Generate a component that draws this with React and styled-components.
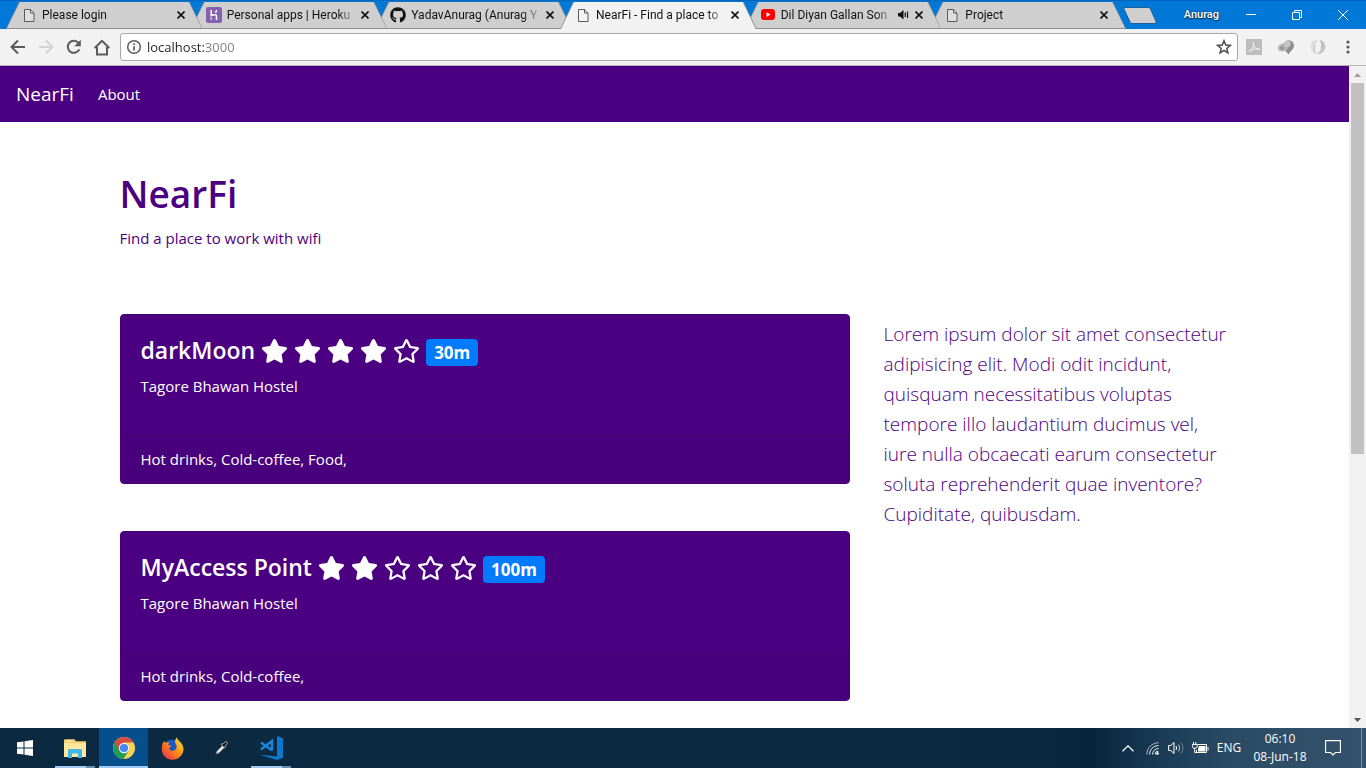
import React from 'react';
import styled, { createGlobalStyle, css } from 'styled-components';
import { FaStar, FaRegStar, FaGithub } from 'react-icons/fa';

const indigo = '#4b0082';

const GlobalStyle = createGlobalStyle`
  *, *::before, *::after { box-sizing: border-box; }
  body {
    margin: 0;
    background: #fff;
    font-family: "Open Sans", "Noto Sans", sans-serif;
    font-size: 15px;
    line-height: 24px;
  }
  button { border: 0; padding: 0; background: none; font: inherit; color: inherit; }
  svg { display: block; flex: none; }
  h1, h2, p, ul { margin: 0; padding: 0; }
  ul { list-style: none; }
`;

const Screen = styled.div`
  display: flex;
  flex-direction: column;
  height: 100vh;
  overflow: hidden;
`;

/* ---- browser window ---- */

const TitleBar = styled.header`
  display: flex;
  align-items: stretch;
  height: 29px;
  padding-left: 6px;
  background: #0078d7;
  border-top: 1px solid #0067bd;
`;

const TabList = styled.ul`
  display: flex;
  flex: 0 1 1108px;
  min-width: 0;
`;

const TabItem = styled.li`
  position: relative;
  display: flex;
  align-items: center;
  flex: 1 1 0;
  min-width: 0;
  margin-right: -12px;
  padding: 0 14px 0 15px;
  z-index: ${(p) => p.$z};
  font-family: Roboto, "Open Sans", sans-serif;
  font-size: 12px;
  line-height: 16px;
  color: #111;

  &::before, &::after {
    content: "";
    position: absolute;
    inset: 0;
    z-index: -1;
    clip-path: polygon(0 100%, 13px 1px, calc(100% - 13px) 1px, 100% 100%);
  }
  &::before { background: #8f8f8f; }
  &::after {
    background: ${(p) => (p.$active ? '#f2f2f2' : '#cfcfcf')};
    clip-path: polygon(
      1px 100%, 14px 1px, calc(100% - 14px) 1px, calc(100% - 1px) 100%);
    ${(p) => !p.$active && css`bottom: 1px;`}
  }
`;

const TabIcon = styled.span`
  display: flex;
  justify-content: center;
  flex: none;
  width: 16px;
  margin-right: 5px;
`;

const TabTitle = styled.span`
  flex: 1;
  min-width: 0;
  overflow: hidden;
  white-space: nowrap;
  mask-image: linear-gradient(to right, #000 calc(100% - 20px), transparent);
`;

const TabButton = styled.button`
  display: grid;
  place-items: center;
  width: 16px;
  height: 16px;
  flex: none;
`;

const NewTab = styled.button`
  align-self: center;
  width: 34px;
  height: 17px;
  margin: 0 0 0 9px;
  flex: none;
`;

const WindowControls = styled.div`
  display: flex;
  align-items: center;
  margin-left: auto;
  color: #fff;
  font-size: 11px;
`;

const Profile = styled.button`
  margin-right: 9px;
  font-family: Roboto, "Open Sans", sans-serif;
  font-weight: 500;
  text-shadow: 0 1px 1px #002a4d, 0 0 2px #002a4d;
`;

const WindowButton = styled.button`
  display: grid;
  place-items: center;
  width: 46px;
  height: 28px;
`;

const Toolbar = styled.div`
  display: flex;
  align-items: center;
  height: 37px;
  padding-left: 6px;
  background: #f2f2f2;
  border-bottom: 1px solid #b4b4b4;
`;

const ToolButton = styled.button`
  display: grid;
  place-items: center;
  width: ${(p) => p.$width}px;
  height: 28px;
  flex: none;
`;

const AddressBar = styled.form`
  display: flex;
  align-items: center;
  flex: 1;
  min-width: 0;
  height: 28px;
  margin: 0 4px 0 2px;
  padding: 0 5px;
  background: #fff;
  border: 1px solid #a9a9a9;
  border-radius: 3px;
`;

const AddressInput = styled.input`
  flex: 1;
  min-width: 0;
  margin-left: 5px;
  padding: 0;
  border: 0;
  outline: 0;
  font: inherit;
  font-size: 13px;
  line-height: 20px;
  color: transparent;
  background: linear-gradient(to right, #222 57px, #808080 57px);
  background-clip: text;
  -webkit-background-clip: text;
`;

const Viewport = styled.div`
  display: flex;
  flex: 1;
  min-height: 0;
`;

const Page = styled.div`
  flex: 1;
  min-width: 0;
  overflow: hidden;
  color: ${indigo};
`;

const ScrollBar = styled.div`
  display: flex;
  flex-direction: column;
  align-items: center;
  flex: none;
  width: 17px;
  background: #f1f1f1;
`;

const ScrollArrow = styled.button`
  display: grid;
  place-items: center;
  width: 17px;
  height: 17px;
  flex: none;
`;

const ScrollTrack = styled.div`
  flex: 1;
  width: 13px;
`;

const ScrollThumb = styled.div`
  height: 59%;
  background: #c1c1c1;
`;

/* ---- site ---- */

const Navbar = styled.nav`
  display: flex;
  align-items: center;
  gap: 24px;
  height: 56px;
  padding: 0 16px;
  background: ${indigo};
`;

const NavLink = styled.a`
  color: #fff;
  text-decoration: none;
  font-size: ${(p) => (p.$brand ? 19 : 15)}px;
`;

const Container = styled.div`
  max-width: 1140px;
  margin: 0 auto;
  padding: 0 15px;
`;

const Banner = styled.header`
  padding: 48px 0 64px;
`;

const SiteTitle = styled.h1`
  margin-bottom: 8px;
  font-size: 37px;
  line-height: 48px;
  font-weight: 600;
`;

const Columns = styled.div`
  display: grid;
  grid-template-columns: minmax(0, 73fr) minmax(0, 35fr);
  gap: 30px;
`;

const CardList = styled.main`
  display: flex;
  flex-direction: column;
  gap: 47px;
`;

const Card = styled.article`
  color: #fff;
  background: ${indigo};
  border: 1px solid #44007a;
  border-radius: 4px;
`;

const CardBody = styled.div`
  padding: 20px 20px 36px;
`;

const CardTitle = styled.h2`
  display: flex;
  align-items: center;
  gap: 6px;
  margin-bottom: 8px;
  font-size: 23px;
  line-height: 31px;
  font-weight: 600;
`;

const Badge = styled.span`
  margin-top: 4px;
  padding: 0 8px;
  border-radius: 4px;
  background: #007bff;
  font-size: 17px;
  line-height: 27px;
  font-weight: 700;
`;

const Stars = styled.span`
  display: flex;
  gap: 6px;
  svg { width: 27px; height: 24px; }
`;

const CardFooter = styled.footer`
  padding: 12px 20px;
  background: #48007d;
  border-top: 1px solid #41006f;
`;

const Sidebar = styled.aside`
  padding: 5px 0 0 4px;
  font-size: 19px;
  line-height: 30px;
  font-weight: 300;
`;

/* ---- taskbar ---- */

const Taskbar = styled.footer`
  display: flex;
  flex: none;
  height: 40px;
  color: #fff;
  background: linear-gradient(to right, #0b2a41, #0c293f 70%, #09253d 80%, #1e3f59 86%, #2b4b65 90%, #34516a);
`;

const TaskButton = styled.button`
  display: grid;
  place-items: center;
  position: relative;
  width: ${(p) => p.$width || 49}px;
  background: ${(p) => (p.$active ? '#05508c' : 'none')};

  &::after {
    content: "";
    position: absolute;
    left: ${(p) => (p.$active ? 0 : 5)}px;
    right: ${(p) => (p.$active ? 0 : 4)}px;
    bottom: 0;
    height: 2px;
    background: ${(p) =>
      p.$active ? '#9fcbf2'
        : p.$running ? 'linear-gradient(to right, #9fcbf2 31px, #6b8fae 31px)'
          : 'none'};
  }
`;

const Tray = styled.div`
  display: flex;
  align-items: center;
  margin-left: auto;
  font-size: 12px;
  line-height: 18px;
`;

const TrayButton = styled.button`
  display: grid;
  place-items: center;
  width: ${(p) => p.$width || 24}px;
  height: 40px;
  text-align: center;
`;

const ShowDesktop = styled.button`
  width: 5px;
  height: 40px;
  margin-left: 9px;
  border-left: 1px solid #7d90a1;
`;

/* ---- icons ---- */

const PageIcon = () => (
  <svg width="12" height="15" viewBox="0 0 12 15" fill="#f4f4f4" fillOpacity=".4" stroke="#5a5a5a">
    <path d="M1.500 1.500h6l3.500 3.500v8.500h-9.500z" />
    <path d="M7.500 1.500v3.500h3.500" />
  </svg>
);

const HerokuIcon = () => (
  <svg width="16" height="16" viewBox="0 0 16 16">
    <rect width="16" height="16" rx="2" fill="#8560ae" />
    <path d="M5.200 3v5.600c1.800-.9 5.300-1.600 5.300.4V13M10.500 3c0 1.200-.4 2-1 2.700" fill="none" stroke="#fff" strokeWidth="1.500" />
    <path d="M4.600 10.300l1.800 1.500-1.800 1.500z" fill="#fff" />
  </svg>
);

const YoutubeIcon = () => (
  <svg width="16" height="12" viewBox="0 0 16 12">
    <rect x="1" width="14" height="11" rx="3" fill="#f00" />
    <path d="M6.500 3.200v4.800l4-2.400z" fill="#fff" />
  </svg>
);

const CloseIcon = () => (
  <svg width="8" height="8" viewBox="0 0 8 8" stroke="#111" strokeWidth="1.600">
    <path d="M.5.5l7 7M7.500.5l-7 7" />
  </svg>
);

const SoundIcon = () => (
  <svg width="11" height="10" viewBox="0 0 11 10">
    <path d="M0 3h2l3.500-3v9.500L2 6.500H0z" fill="#111" />
    <path d="M7.200 2.500v4.500M9.500 1.500v6.500" stroke="#111" strokeWidth="1.200" />
  </svg>
);

const Arrow = ({ color, flip }) => (
  <svg width="16" height="16" viewBox="0 0 16 16" fill="none" stroke={color} strokeWidth="2">
    <path d={flip ? 'M1 8h13M8 1.500L14.500 8 8 14.500' : 'M15 8H2M8 1.500L1.500 8 8 14.500'} />
  </svg>
);

const ReloadIcon = () => (
  <svg width="16" height="16" viewBox="0 0 16 16">
    <path d="M13.300 10.300A6 6 0 1 1 12.500 4" fill="none" stroke="#5a5a5a" strokeWidth="2" />
    <path d="M14.800.8v6.400H8.400z" fill="#5a5a5a" />
  </svg>
);

const HomeIcon = () => (
  <svg width="18" height="17" viewBox="0 0 18 17" fill="none" stroke="#5a5a5a" strokeWidth="2">
    <path d="M1.700 9L9 1.800 16.300 9M4 8v7.500h10V8" />
  </svg>
);

const InfoIcon = () => (
  <svg width="16" height="16" viewBox="0 0 16 16" fill="none" stroke="#5a5a5a">
    <circle cx="8" cy="8" r="6.300" strokeWidth="1.500" />
    <path d="M8 7.200v4.300M8 4.300v1.700" strokeWidth="1.700" />
  </svg>
);

const BookmarkIcon = () => (
  <svg width="16" height="16" viewBox="0 0 16 16" fill="none" stroke="#4d4d4d" strokeWidth="1.500">
    <path d="M8 1.800l1.700 4.300 4.600.3-3.500 3 1.100 4.500L8 11.400l-3.900 2.500 1.100-4.500-3.500-3 4.600-.3z" />
  </svg>
);

const PdfIcon = () => (
  <svg width="16" height="16" viewBox="0 0 16 16">
    <rect width="16" height="16" fill="#bdbdbd" />
    <path d="M3 12.500c2.500-1 4.800-5 4.800-8.500 0-1.500-1-.8-.6.700C8 7.500 10 10.200 13 10.500c1.500 0 .5-1-1.200-.9-2.800.1-6 1-8.800 2.900z"
      fill="none" stroke="#f2f2f2" />
  </svg>
);

const BalloonIcon = () => (
  <svg width="18" height="16" viewBox="0 0 18 16">
    <path d="M11.500 15.500C8.500 12 6.500 9.500 6.500 6.500a5 5 0 0 1 10.500 0c0 3.500-3.500 5.500-5.500 9z" fill="#8d8d8d" />
    <path d="M1 9.500c0-3 3-5.500 6-5 2.500.3 4.500 2 4 4.500-.5 2.500-3 3.500-6 3.300C2.500 12.200 1 11 1 9.500z" fill="#b4b4b4" />
    <circle cx="10.500" cy="5" r="3.200" fill="#c4c4c4" />
    <circle cx="5" cy="9" r="1.800" fill="#8f8f8f" />
  </svg>
);

const SwirlIcon = () => (
  <svg width="16" height="16" viewBox="0 0 16 16">
    <path d="M9 .8C3.500-.2.300 4 .6 8c.3 3.500 2.400 6 5.400 7-1.500-2-2-4-1.600-6C4.900 6 6 3 9 .8z" fill="#dedede" />
    <path d="M10 1c3.500.8 5.600 3.700 5.400 7-.3 4-3.900 7.500-8.900 7.200C9.500 13.500 11 11.500 11.500 8.500c.3-2.500 0-5-1.500-7.500z" fill="#c2c2c2" />
    <path d="M5.500 14.500Q3 11 5 6.500M10.500 1.500Q13 5 11 9.500" fill="none" stroke="#b0b0b0" strokeWidth=".8" />
  </svg>
);

const MenuIcon = () => (
  <svg width="4" height="14" viewBox="0 0 4 14" fill="#5a5a5a">
    <circle cx="2" cy="2" r="1.600" /><circle cx="2" cy="7" r="1.600" /><circle cx="2" cy="12" r="1.600" />
  </svg>
);

const WindowsIcon = () => (
  <svg width="16" height="16" viewBox="0 0 16 16" fill="#fff">
    <path d="M0 2.300l6.500-.9v6.100H0zM7.500 1.200L16 0v7.500H7.500zM0 8.500h6.500v6.100L0 13.700zM7.500 8.500H16V16l-8.500-1.200z" />
  </svg>
);

const ExplorerIcon = () => (
  <svg width="22" height="19" viewBox="0 0 22 19">
    <path d="M0 1.500C0 .7.500.3 1 .3h9.500l1.500 2h9c.6 0 1 .4 1 1V18H0z" fill="#f5d06e" />
    <path d="M0 4h22v14H0z" fill="#ffe79c" />
    <path d="M2 1.500h7v1H2z" fill="#fff3cd" />
    <path d="M4 19v-7.500c0-.9.600-1.500 1.500-1.500h11c.9 0 1.500.6 1.500 1.500V19h-4v-4.500H8V19z" fill="#3fb8e8" />
  </svg>
);

const ChromeIcon = () => (
  <svg width="22" height="22" viewBox="0 0 22 22">
    <circle cx="11" cy="11" r="11" fill="#fbd250" />
    <path d="M11 11L1.500 5.500A11 11 0 0 0 10.500 22l5.200-8.300z" fill="#1f9d58" />
    <path d="M1.500 5.500a11 11 0 0 1 19 0H11v5.500L6.300 13.700z" fill="#d84b3f" />
    <circle cx="11" cy="11" r="5.200" fill="#f4f4f4" />
    <circle cx="11" cy="11" r="4.100" fill="#4688f1" />
  </svg>
);

const FirefoxIcon = () => (
  <svg width="23" height="23" viewBox="0 0 23 23">
    <defs>
      <linearGradient id="fox" x1="1" y1="0" x2="0" y2="1">
        <stop offset="0" stopColor="#ffe635" />
        <stop offset=".5" stopColor="#ff8a16" />
        <stop offset="1" stopColor="#ed1c5b" />
      </linearGradient>
    </defs>
    <circle cx="11" cy="11.500" r="9" fill="#1857c4" />
    <path d="M3 4c.3.900.8 1.400 1.500 1.800C6 5 7.500 5 8.500 5.400c-1 .9-1.500 1.600-1.300 2.600l3 .8c0 1-1.800 1.400-2.200 2.200 0 3 4 3.800 6.500 1.500 1.500-1.500 1.500-4 0-6C13.700 5.500 14 2.500 16 .3c.3 2 1.500 3 3 4.400 2 2 3.600 4.600 3.500 7.800C22 18.500 17.500 22.700 11.500 22.700 5.500 22.700.8 18.500.8 12 .8 8.500 1.500 6 3 4z" fill="url(#fox)" />
  </svg>
);

const PickerIcon = () => (
  <svg width="13" height="14" viewBox="0 0 13 14">
    <path d="M1 13l1-3 5.500-5.500 2 2L4 12z" fill="#e4e4e4" stroke="#777" strokeWidth=".7" />
    <path d="M6 3.500l1-1 1 .8L10 1c1.500-1.200 3.200.5 2 2L9.800 5l.8 1-1 1z" fill="#111" stroke="#ddd" strokeWidth=".7" />
  </svg>
);

const CodeIcon = () => (
  <svg width="24" height="24" viewBox="0 0 24 24">
    <path d="M18 0l6 2.300v19.400L18 24 0 18.500l18 2z" fill="#0e78cf" />
    <path d="M2 6.500l10.500 7.500M2 13.500L13 5v9.500" fill="none" stroke="#1c87da" strokeWidth="2.400" />
  </svg>
);

const ChevronIcon = () => (
  <svg width="12" height="7" viewBox="0 0 12 7" fill="none" stroke="#fff" strokeWidth="1.300">
    <path d="M.5 6.300L6 .9l5.500 5.400" />
  </svg>
);

const WifiIcon = () => (
  <svg width="13" height="13" viewBox="0 0 13 13" fill="none" stroke="#e8edf1">
    <path d="M.8 12.500C.8 6 6 .8 12.500.8" stroke="#a9b7c2" />
    <path d="M3.500 12.500a9 9 0 0 1 9-9M6.500 12.500a6 6 0 0 1 6-6" />
    <path d="M9 12.500a3.500 3.500 0 0 1 3.500-3.500" />
    <circle cx="11.500" cy="11.500" r="1" fill="#fff" />
  </svg>
);

const VolumeIcon = () => (
  <svg width="17" height="14" viewBox="0 0 17 14" fill="none" stroke="#fff">
    <path d="M.6 4.500h2.200L6 1.500v11L2.800 9.500H.6z" />
    <path d="M8 5q1.500 2 0 4" />
    <path d="M10.500 3.500q2.500 3.500 0 7" stroke="#b7c2cc" />
    <path d="M13 1.500q4 5.500 0 11" stroke="#708496" />
  </svg>
);

const BatteryIcon = () => (
  <svg width="17" height="12" viewBox="0 0 17 12">
    <path d="M5.500 2.500h9v8h-10V8M16 5v3.500" fill="none" stroke="#fff" />
    <path d="M7 4h6.500v5.500H6V6.500z" fill="#fff" />
    <path d="M1.500 0v2.500M3.800 0v2.500M.3 2.500h4.900v1.800q0 2-2.500 2T.3 4.300zM2.700 6v4.500h2" fill="none" stroke="#fff" />
  </svg>
);

const NoticeIcon = () => (
  <svg width="16" height="16" viewBox="0 0 16 16" fill="none" stroke="#fff" strokeWidth="1.100">
    <path d="M.6.6h14.800v11.900h-5L8 15l-2.400-2.500h-5z" />
  </svg>
);

const tabs = [
  { title: 'Please login', icon: <PageIcon /> },
  { title: 'Personal apps | Heroku', icon: <HerokuIcon /> },
  { title: 'YadavAnurag (Anurag Y', icon: <FaGithub size={16} /> },
  { title: 'NearFi - Find a place to', icon: <PageIcon />, active: true },
  { title: 'Dil Diyan Gallan Son', icon: <YoutubeIcon />, sound: true },
  { title: 'Project', icon: <PageIcon /> },
];

const places = [
  { name: 'darkMoon', rating: 4, distance: '30m', address: 'Tagore Bhawan Hostel', facilities: 'Hot drinks, Cold-coffee, Food,' },
  { name: 'MyAccess Point', rating: 2, distance: '100m', address: 'Tagore Bhawan Hostel', facilities: 'Hot drinks, Cold-coffee,' },
];

function Tab({ tab, z }) {
  return (
    <TabItem $active={tab.active} $z={z}>
      <TabIcon>{tab.icon}</TabIcon>
      <TabTitle>{tab.title}</TabTitle>
      {tab.sound && <TabButton aria-label="Mute tab"><SoundIcon /></TabButton>}
      <TabButton aria-label="Close tab"><CloseIcon /></TabButton>
    </TabItem>
  );
}

function Place({ place }) {
  return (
    <Card>
      <CardBody>
        <CardTitle>
          {place.name}
          <Stars>
            {[1, 2, 3, 4, 5].map((n) => (n <= place.rating ? <FaStar key={n} /> : <FaRegStar key={n} />))}
          </Stars>
          <Badge>{place.distance}</Badge>
        </CardTitle>
        <p>{place.address}</p>
      </CardBody>
      <CardFooter>{place.facilities}</CardFooter>
    </Card>
  );
}

export default function App() {
  return (
    <Screen>
      <GlobalStyle />
      <TitleBar>
        <TabList>
          {tabs.map((tab, i) => <Tab key={tab.title} tab={tab} z={tab.active ? 10 : 9 - i} />)}
        </TabList>
        <NewTab aria-label="New tab">
          <svg width="34" height="17" viewBox="0 0 34 17">
            <path d="M2 .5h23.500q1.500 0 2 1.500l5.500 12.500q.5 2-1 2H9q-1.500 0-2-1.500L1 2Q.5.500 2 .5z" fill="#cfcfcf" stroke="#1d5f9c" />
          </svg>
        </NewTab>
        <WindowControls>
          <Profile>Anurag</Profile>
          <WindowButton aria-label="Minimize">
            <svg width="10" height="10" viewBox="0 0 10 10"><path d="M0 4.500h10" stroke="#fff" /></svg>
          </WindowButton>
          <WindowButton aria-label="Restore">
            <svg width="10" height="10" viewBox="0 0 10 10" fill="none" stroke="#fff">
              <path d="M.5 2.500h7v7h-7zM2.500 2.500v-2h7v7h-2" />
            </svg>
          </WindowButton>
          <WindowButton aria-label="Close">
            <svg width="10" height="10" viewBox="0 0 10 10" stroke="#fff"><path d="M0 0l10 10M10 0L0 10" /></svg>
          </WindowButton>
        </WindowControls>
      </TitleBar>
      <Toolbar>
        <ToolButton $width={24} aria-label="Back"><Arrow color="#5a5a5a" /></ToolButton>
        <ToolButton $width={32} aria-label="Forward"><Arrow color="#d3d3d3" flip /></ToolButton>
        <ToolButton $width={24} aria-label="Reload"><ReloadIcon /></ToolButton>
        <ToolButton $width={32} aria-label="Home"><HomeIcon /></ToolButton>
        <AddressBar>
          <InfoIcon />
          <AddressInput aria-label="Address" defaultValue="localhost:3000" />
          <BookmarkIcon />
        </AddressBar>
        <ToolButton $width={24} aria-label="PDF extension"><PdfIcon /></ToolButton>
        <ToolButton $width={40} aria-label="Balloon extension"><BalloonIcon /></ToolButton>
        <ToolButton $width={24} aria-label="Swirl extension"><SwirlIcon /></ToolButton>
        <ToolButton $width={36} aria-label="Menu"><MenuIcon /></ToolButton>
      </Toolbar>
      <Viewport>
        <Page>
          <Navbar>
            <NavLink href="#home" $brand>NearFi</NavLink>
            <NavLink href="#about">About</NavLink>
          </Navbar>
          <Container>
            <Banner>
              <SiteTitle>NearFi</SiteTitle>
              <p>Find a place to work with wifi</p>
            </Banner>
            <Columns>
              <CardList>
                {places.map((place) => <Place key={place.name} place={place} />)}
              </CardList>
              <Sidebar>
                <p>
                  Lorem ipsum dolor sit amet consectetur adipisicing elit. Modi odit incidunt,
                  quisquam necessitatibus voluptas tempore illo laudantium ducimus vel, iure nulla
                  obcaecati earum consectetur soluta reprehenderit quae inventore? Cupiditate,
                  quibusdam.
                </p>
              </Sidebar>
            </Columns>
          </Container>
        </Page>
        <ScrollBar>
          <ScrollArrow aria-label="Scroll up">
            <svg width="7" height="4" viewBox="0 0 7 4"><path d="M0 4l3.500-4L7 4z" fill="#a3a3a3" /></svg>
          </ScrollArrow>
          <ScrollTrack><ScrollThumb /></ScrollTrack>
          <ScrollArrow aria-label="Scroll down">
            <svg width="7" height="4" viewBox="0 0 7 4"><path d="M0 0l3.500 4L7 0z" fill="#505050" /></svg>
          </ScrollArrow>
        </ScrollBar>
      </Viewport>
      <Taskbar>
        <TaskButton $width={50} aria-label="Start"><WindowsIcon /></TaskButton>
        <TaskButton $running aria-label="File Explorer"><ExplorerIcon /></TaskButton>
        <TaskButton $active aria-label="Chrome"><ChromeIcon /></TaskButton>
        <TaskButton aria-label="Firefox"><FirefoxIcon /></TaskButton>
        <TaskButton aria-label="Color picker"><PickerIcon /></TaskButton>
        <TaskButton $running aria-label="Visual Studio Code"><CodeIcon /></TaskButton>
        <Tray>
          <TrayButton aria-label="Show hidden icons"><ChevronIcon /></TrayButton>
          <TrayButton aria-label="Network"><WifiIcon /></TrayButton>
          <TrayButton aria-label="Volume"><VolumeIcon /></TrayButton>
          <TrayButton aria-label="Battery"><BatteryIcon /></TrayButton>
          <TrayButton $width={34}>ENG</TrayButton>
          <TrayButton $width={68}><span>06:10<br />08-Jun-18</span></TrayButton>
          <TrayButton $width={38} aria-label="Notifications"><NoticeIcon /></TrayButton>
          <ShowDesktop aria-label="Show desktop" />
        </Tray>
      </Taskbar>
    </Screen>
  );
}
